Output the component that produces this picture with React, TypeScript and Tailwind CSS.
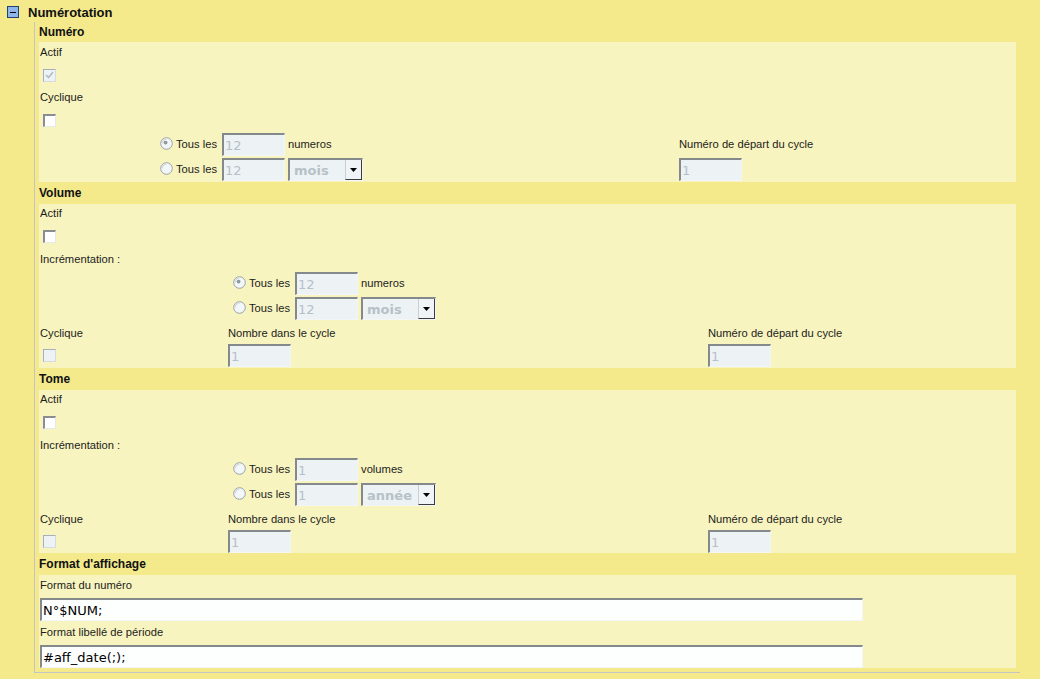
import React from "react";

const LBL = "text-[11.2px] leading-none text-[#1c1c1c] whitespace-nowrap";

function Radio({ checked = false }: { checked?: boolean }) {
  return (
    <svg width="13" height="13" viewBox="0 0 13 13" className="shrink-0 mb-[3px]">
      <circle cx="6.5" cy="6.5" r="5.8" fill="#f4f7f9" stroke="#99a2a8" strokeWidth="1" />
      <path d="M2.2 6.5a4.3 4.3 0 0 1 4.3-4.3" stroke="#d4dade" strokeWidth="1.2" fill="none" />
      {checked && <circle cx="5.6" cy="5.6" r="1.9" fill="#8d979d" />}
    </svg>
  );
}

function Checkbox({ checked = false, disabled = false }: { checked?: boolean; disabled?: boolean }) {
  if (disabled) {
    return (
      <div className="w-[13px] h-[13px] border border-t-[#a7b0b6] border-l-[#a7b0b6] border-r-[#d5dbdf] border-b-[#d5dbdf] bg-[#edf2f5] flex items-center justify-center">
        {checked && (
          <svg width="9" height="8" viewBox="0 0 9 8">
            <path d="M1 4l2.5 2.5L8 1" stroke="#b3bcc3" strokeWidth="1.6" fill="none" />
          </svg>
        )}
      </div>
    );
  }
  return (
    <div className="w-[13px] h-[13px] border-t-2 border-l-2 border-t-[#8a8e91] border-l-[#8a8e91] border-r border-b border-r-[#e6e9eb] border-b-[#e6e9eb] bg-white" />
  );
}

function Field({ value, white = false, w = "w-[63px]" }: { value: string; white?: boolean; w?: string }) {
  return (
    <div
      className={
        (white
          ? "bg-[#fdfefe] text-[#000000] "
          : "bg-[#edf2f5] text-[#b5c0c8] ") +
        w +
        " h-[23px] shrink-0 flex items-center pl-[1px] border-t-2 border-l-2 border-t-[#84898c] border-l-[#84898c] border-r border-b border-r-[#f3f5f6] border-b-[#f3f5f6] text-[13px] leading-none font-['DejaVu_Sans',sans-serif] whitespace-nowrap"
      }
    >
      {value}
    </div>
  );
}

function Select({ value }: { value: string }) {
  return (
    <div className="flex h-[23px] w-[75px] border-t-2 border-l-2 border-t-[#84898c] border-l-[#84898c] border-r border-b border-r-[#f3f5f6] border-b-[#f3f5f6] bg-[#edf2f5]">
      <div className="flex-1 flex items-center pl-[4px] font-bold text-[13px] leading-none text-[#b7c1c8] font-['DejaVu_Sans',sans-serif]">
        {value}
      </div>
      <div className="w-[17px] flex items-center justify-center bg-[#f1f4f6] border-l border-l-[#c9d0d4] border-r border-b border-r-[#3c3c3c] border-b-[#3c3c3c]">
        <svg width="7" height="4" viewBox="0 0 7 4">
          <path d="M0 0h7L3.5 4z" fill="#000" />
        </svg>
      </div>
    </div>
  );
}

function RadioLine({
  checked = false,
  value,
  after,
}: {
  checked?: boolean;
  value: string;
  after: React.ReactNode;
}) {
  return (
    <div className="flex items-center h-[23px]">
      <Radio checked={checked} />
      <span className={LBL + " ml-[3px] mr-[5px]"}>Tous les</span>
      <Field value={value} />
      <div className="ml-[3px] flex items-center">{after}</div>
    </div>
  );
}

function Heading({ children }: { children: React.ReactNode }) {
  return (
    <div className="h-[22px] flex items-center text-[12px] font-bold leading-none text-[#111]">{children}</div>
  );
}

function Label({ children, h }: { children: React.ReactNode; h: string }) {
  return (
    <div className={h + " flex items-center pl-[1px]"}>
      <span className={LBL}>{children}</span>
    </div>
  );
}

function IncrementPanel({
  unit,
  period,
  firstChecked,
  lastRow,
}: {
  unit: string;
  period: string;
  firstChecked: boolean;
  lastRow: string;
}) {
  return (
    <div className="bg-[#f8f4bf]">
      <Label h="h-[20px]">Actif</Label>
      <div className="h-[24px] flex items-center pl-[4px]">
        <Checkbox />
      </div>
      <Label h="h-[23px]">Incrémentation :</Label>
      <div className="flex pt-[1px] pb-[1px]">
        <div className="w-[189px] shrink-0" />
        <div className="pl-[5px] flex flex-col gap-[2px]">
          <RadioLine checked={firstChecked} value={firstChecked ? "12" : "1"} after={<span className={LBL}>{unit}</span>} />
          <RadioLine value={firstChecked ? "12" : "1"} after={<Select value={period} />} />
        </div>
      </div>
      <div className="h-[21px] flex items-center">
        <div className="w-[189px] shrink-0 pl-[1px]">
          <span className={LBL}>Cyclique</span>
        </div>
        <div className="w-[480px] shrink-0">
          <span className={LBL}>Nombre dans le cycle</span>
        </div>
        <div className="flex-1">
          <span className={LBL}>Numéro de départ du cycle</span>
        </div>
      </div>
      <div className={lastRow + " flex items-start pt-[2px]"}>
        <div className="w-[189px] shrink-0 pl-[4px] h-[23px] flex items-center">
          <Checkbox disabled />
        </div>
        <div className="w-[480px] shrink-0">
          <Field value="1" />
        </div>
        <div className="flex-1">
          <Field value="1" />
        </div>
      </div>
    </div>
  );
}

export default function App() {
  return (
    <div className="w-[1040px] h-[679px] bg-[#f4ea8c] overflow-hidden font-['Liberation_Sans',Arial,sans-serif]">
      <div className="h-[22px] flex items-center pl-[7px] pt-[2px]">
        <div className="w-[12px] h-[12px] border border-[#23426f] bg-[#8db6ec] flex items-center justify-center">
          <div className="w-[6px] h-[1px] bg-black" />
        </div>
        <span className="ml-[9px] text-[13px] font-bold leading-none text-[#111]">Numérotation</span>
      </div>

      <div className="ml-[34px] w-[986px] border-l border-b border-[#c4c4c4] pl-[4px] pr-[4px] pb-[4px]">
        <div className="h-[20px] flex items-center text-[12px] font-bold leading-none text-[#111]">Numéro</div>
        <div className="bg-[#f8f4bf]">
          <Label h="h-[22px]">Actif</Label>
          <div className="h-[22px] flex items-center pl-[4px]">
            <Checkbox checked disabled />
          </div>
          <Label h="h-[23px]">Cyclique</Label>
          <div className="h-[22px] flex items-center pl-[4px]">
            <Checkbox />
          </div>
          <div className="flex pt-[2px] pb-[1px]">
            <div className="w-[116px] shrink-0" />
            <div className="w-[524px] shrink-0 pl-[5px] flex flex-col gap-[2px]">
              <RadioLine checked value="12" after={<span className={LBL}>numeros</span>} />
              <RadioLine value="12" after={<Select value="mois" />} />
            </div>
            <div className="flex-1 flex flex-col gap-[2px]">
              <div className="h-[23px] flex items-center">
                <span className={LBL}>Numéro de départ du cycle</span>
              </div>
              <Field value="1" />
            </div>
          </div>
        </div>

        <Heading>Volume</Heading>
        <IncrementPanel unit="numeros" period="mois" firstChecked lastRow="h-[26px]" />

        <Heading>Tome</Heading>
        <IncrementPanel unit="volumes" period="année" firstChecked={false} lastRow="h-[25px]" />

        <Heading>Format d'affichage</Heading>
        <div className="bg-[#f8f4bf]">
          <Label h="h-[22px]">Format du numéro</Label>
          <div className="h-[25px] pt-[1px] pl-[1px]">
            <Field value="N°$NUM;" white w="w-[823px]" />
          </div>
          <Label h="h-[22px]">Format libellé de période</Label>
          <div className="h-[24px] pt-[1px] pl-[1px]">
            <Field value="#aff_date(;);" white w="w-[823px]" />
          </div>
        </div>
      </div>
    </div>
  );
}
